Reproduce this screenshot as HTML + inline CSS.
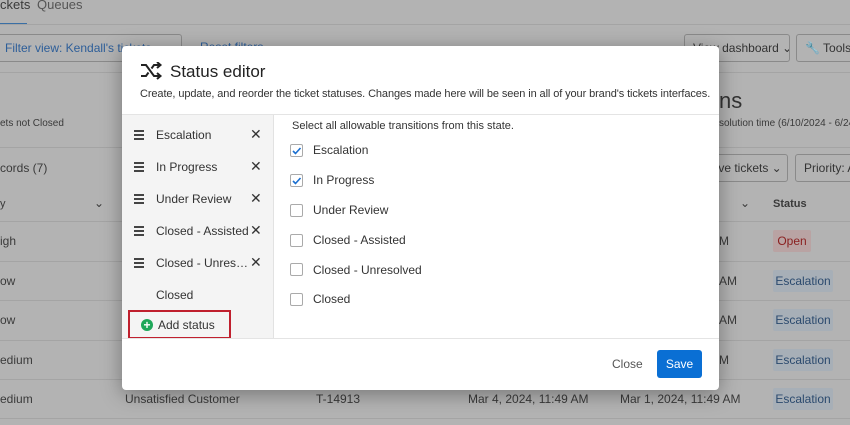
<!DOCTYPE html>
<html><head><meta charset="utf-8"><style>
*{box-sizing:border-box;margin:0;padding:0}
body{width:850px;height:425px;overflow:hidden;background:#b3b3b3;font-family:"Liberation Sans",sans-serif;position:relative;color:#2a2a2a}
.a{position:absolute;white-space:nowrap}
.bg{color:#3a3a3a;font-size:12px}
.line{position:absolute;left:0;right:0;height:1px;background:#a4a4a4}
.pill{position:absolute;left:773px;width:60px;height:22px;background:#a7afb7;color:#2b4a6e;font-size:12px;text-align:center;line-height:22px;border-radius:2px}
.btn{position:absolute;border:1px solid #8a8a8a;border-radius:3px;height:28px;font-size:12px;line-height:26px;padding:0 8px;color:#333;white-space:nowrap;overflow:hidden}
.modal{position:absolute;left:122px;top:46px;width:597px;height:344px;background:#fff;border-radius:4px;box-shadow:0 4px 20px rgba(0,0,0,.35);overflow:hidden}
.left{position:absolute;left:0;top:69px;width:152px;height:224px;background:#f4f4f4;border-right:1px solid #e2e2e2}
.it{position:absolute;left:0;width:152px;height:32px;font-size:12px;color:#333}
.it .h{position:absolute;left:12px;top:11px;width:10px}
.it .h i{display:block;height:1.5px;background:#444;margin-bottom:2.5px}
.it .t{position:absolute;left:34px;top:9px}
.it .x{position:absolute;left:128px;top:7px;font-size:14px;color:#333}
.cb{position:absolute;left:168px;width:13px;height:13px;border:1px solid #aaa;border-radius:2px;background:#fff}
.cl{position:absolute;left:191px;font-size:12px;color:#333}
</style></head><body>
<div class="a bg" style="left:0;top:-3px;font-size:13px">ckets</div>
<div class="a bg" style="left:37px;top:-3px;font-size:13px;color:#555">Queues</div>
<div style="position:absolute;left:0;top:23px;width:27px;height:2px;background:#3a6fa5"></div>
<div class="line" style="top:24px"></div>
<div class="btn" style="left:-4px;top:34px;width:186px;color:#2d5e99">Filter view: Kendall's tickets</div>
<div class="a" style="left:200px;top:40px;font-size:12px;color:#2d5e99">Reset filters</div>
<div class="btn" style="left:684px;top:34px;width:106px">View dashboard ⌄</div>
<div class="btn" style="left:796px;top:34px;width:60px">🔧 Tools</div>
<div class="line" style="top:72px"></div>
<div class="a bg" style="left:0;top:118px;font-size:10px">ets not Closed</div>
<div class="a" style="left:719px;top:88px;font-size:22px;color:#333">ns</div>
<div class="a bg" style="left:719px;top:118px;font-size:10px">solution time (6/10/2024 - 6/24/...</div>
<div class="line" style="top:147px"></div>
<div class="a bg" style="left:0;top:161px;font-size:12px">cords (7)</div>
<div class="btn" style="left:700px;top:154px;width:88px">&nbsp;&nbsp;ive tickets ⌄</div>
<div class="btn" style="left:795px;top:154px;width:70px">Priority: Al</div>
<div class="a bg" style="left:0;top:198px;font-size:11px">y</div>
<div class="a bg" style="left:94px;top:196px">⌄</div>
<div class="a bg" style="left:740px;top:196px">⌄</div>
<div class="a bg" style="left:773px;top:198px;font-size:11px;font-weight:bold">Status</div>
<div class="line" style="top:221px"></div>
<div class="line" style="top:261px"></div>
<div class="line" style="top:300px"></div>
<div class="line" style="top:340px"></div>
<div class="line" style="top:379px"></div>
<div class="line" style="top:418px"></div>
<div class="a bg" style="left:0;top:234px">igh</div>
<div class="a bg" style="left:0;top:274px">ow</div>
<div class="a bg" style="left:0;top:313px">ow</div>
<div class="a bg" style="left:0;top:353px">edium</div>
<div class="a bg" style="left:0;top:392px">edium</div>
<div class="a bg" style="left:125px;top:392px">Unsatisfied Customer</div>
<div class="a bg" style="left:316px;top:392px">T-14913</div>
<div class="a bg" style="left:468px;top:392px">Mar 4, 2024, 11:49 AM</div>
<div class="a bg" style="left:620px;top:392px">Mar 1, 2024, 11:49 AM</div>
<div class="a bg" style="left:719px;top:234px">M</div>
<div class="a bg" style="left:719px;top:274px">AM</div>
<div class="a bg" style="left:719px;top:313px">AM</div>
<div class="a bg" style="left:719px;top:353px">M</div>
<div class="pill" style="top:230px;width:38px;background:#b9a3a3;color:#8a1f1f">Open</div>
<div class="pill" style="top:270px">Escalation</div>
<div class="pill" style="top:309px">Escalation</div>
<div class="pill" style="top:349px">Escalation</div>
<div class="pill" style="top:388px">Escalation</div>

<div class="modal">
<svg class="a" style="left:18px;top:16px" width="24" height="18" viewBox="0 0 24 18"><path d="M1 3h5l8 11h6M1 14h5l2.5-3.5M11.5 6.5L14 3h6M17 0l3.5 3L17 6M17 11l3.5 3L17 17" fill="none" stroke="#222" stroke-width="2"/></svg>
<div class="a" style="left:48px;top:16px;font-size:17px;color:#222">Status editor</div>
<div class="a" style="left:18px;top:42px;font-size:11px;letter-spacing:-0.1px;color:#333">Create, update, and reorder the ticket statuses. Changes made here will be seen in all of your brand's tickets interfaces.</div>
<div style="position:absolute;left:0;right:0;top:68px;height:1px;background:#e4e4e4"></div>
<div class="left">
 <div class="it" style="top:4px"><div class="h"><i></i><i></i><i></i></div><span class="t">Escalation</span><span class="x">✕</span></div>
 <div class="it" style="top:36px"><div class="h"><i></i><i></i><i></i></div><span class="t">In Progress</span><span class="x">✕</span></div>
 <div class="it" style="top:68px"><div class="h"><i></i><i></i><i></i></div><span class="t">Under Review</span><span class="x">✕</span></div>
 <div class="it" style="top:100px"><div class="h"><i></i><i></i><i></i></div><span class="t">Closed - Assisted</span><span class="x">✕</span></div>
 <div class="it" style="top:132px"><div class="h"><i></i><i></i><i></i></div><span class="t">Closed - Unres…</span><span class="x">✕</span></div>
 <div class="it" style="top:164px"><span class="t">Closed</span></div>
 <div style="position:absolute;left:6px;top:195px;width:103px;height:29px;border:2px solid #c0202e"></div>
 <div style="position:absolute;left:19px;top:204px;width:12px;height:12px;border-radius:50%;background:#1ea75a;color:#fff;font-size:12px;font-weight:bold;line-height:12px;text-align:center">+</div>
 <div class="a" style="left:36px;top:203px;font-size:12px;color:#333">Add status</div>
</div>
<div class="a" style="left:170px;top:74px;font-size:11px;color:#333">Select all allowable transitions from this state.</div>
<div class="cb" style="top:98px"><svg width="11" height="11" style="position:absolute;left:0;top:0"><path d="M2 6l2.5 2.5L9.5 3" fill="none" stroke="#1a6fd0" stroke-width="1.6"/></svg></div><div class="cl" style="top:97px">Escalation</div>
<div class="cb" style="top:128px"><svg width="11" height="11" style="position:absolute;left:0;top:0"><path d="M2 6l2.5 2.5L9.5 3" fill="none" stroke="#1a6fd0" stroke-width="1.6"/></svg></div><div class="cl" style="top:127px">In Progress</div>
<div class="cb" style="top:158px"></div><div class="cl" style="top:157px">Under Review</div>
<div class="cb" style="top:188px"></div><div class="cl" style="top:187px">Closed - Assisted</div>
<div class="cb" style="top:217px"></div><div class="cl" style="top:217px">Closed - Unresolved</div>
<div class="cb" style="top:247px"></div><div class="cl" style="top:246px">Closed</div>
<div style="position:absolute;left:0;right:0;top:292px;height:1px;background:#e4e4e4"></div>
<div class="a" style="left:490px;top:311px;font-size:12px;color:#555">Close</div>
<div style="position:absolute;left:535px;top:304px;width:45px;height:28px;background:#0a6fd4;border-radius:3px;color:#fff;font-size:12px;text-align:center;line-height:28px">Save</div>
</div>
</body></html>
